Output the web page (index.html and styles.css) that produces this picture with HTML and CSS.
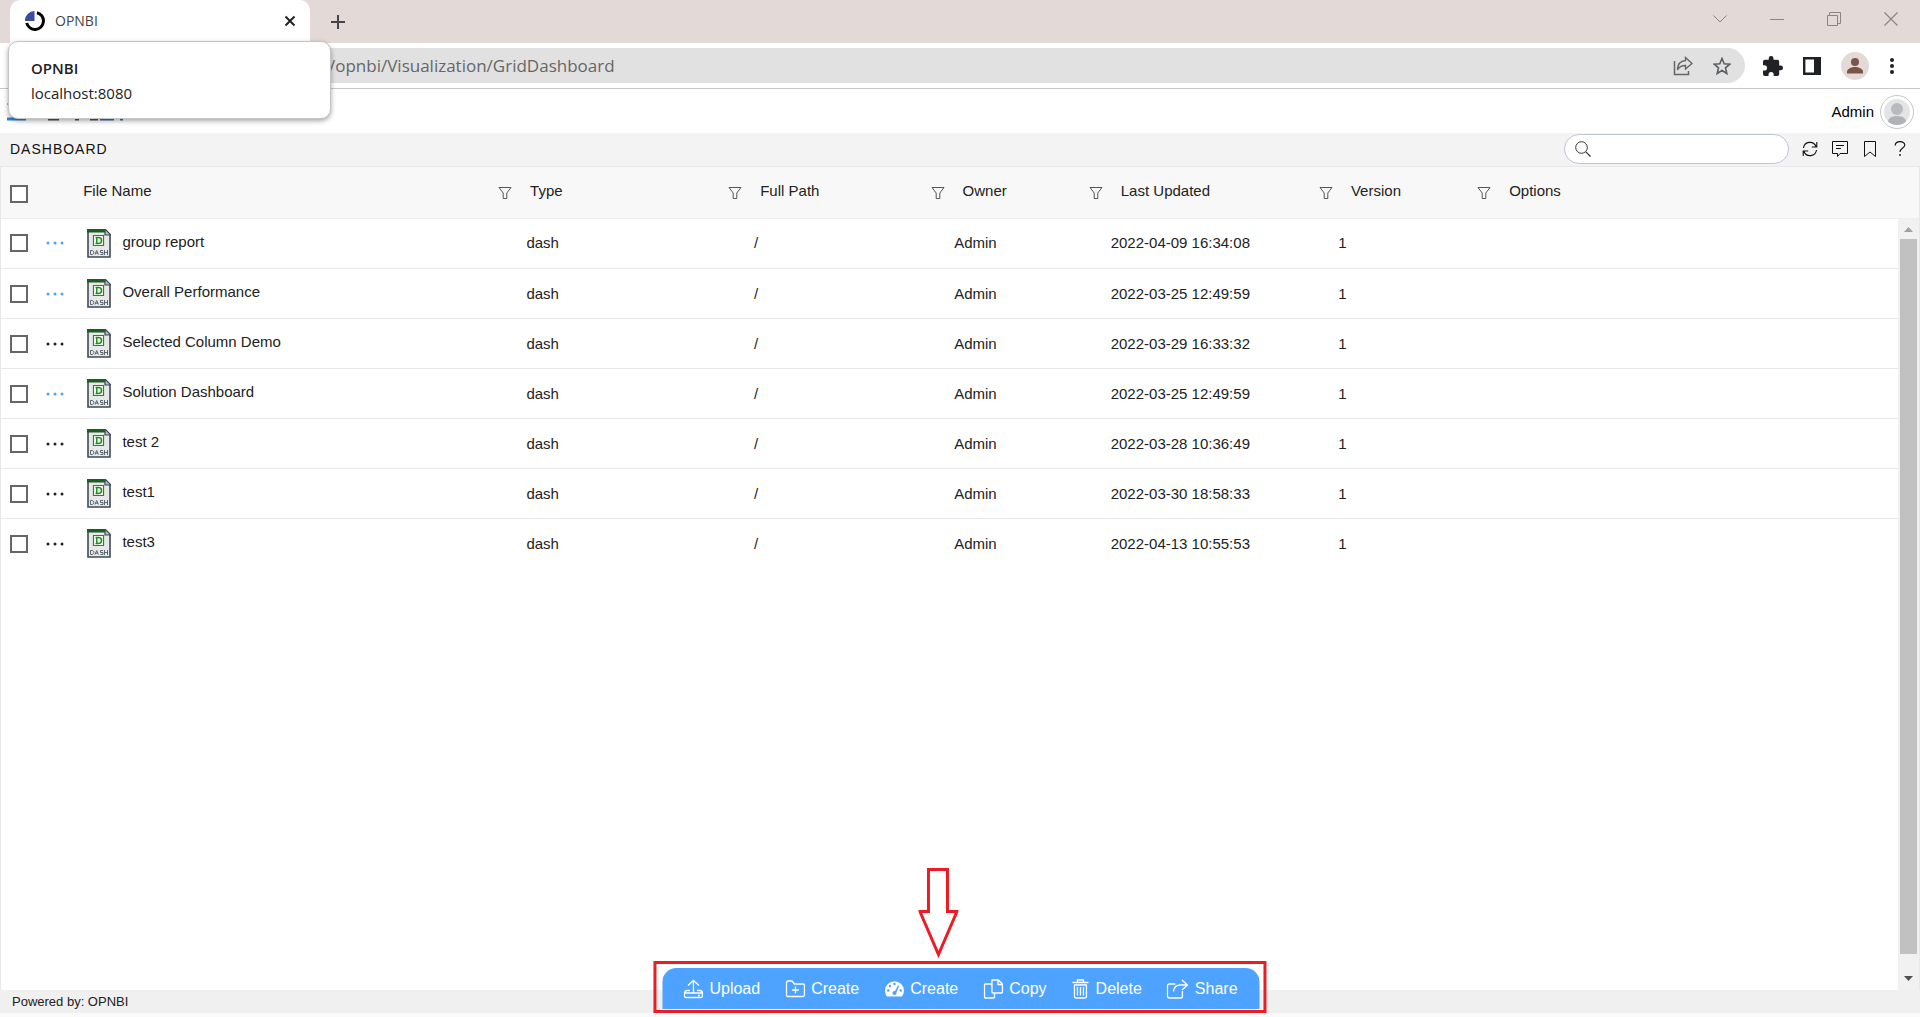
FILE: index.html
```html
<!DOCTYPE html>
<html lang="en">
<head>
<meta charset="utf-8">
<title>OPNBI</title>
<link rel="stylesheet" href="styles.css">
</head>
<body>
<svg class="defs" width="0" height="0" aria-hidden="true">
  <symbol id="filter" viewBox="0 0 14 14"><path d="M1 1.5h12L8.8 7v5.5H5.2V7z" fill="none" stroke="#555" stroke-width="1"/></symbol>
  <symbol id="dash" viewBox="0 0 24 29">
    <path d="M1 1h17l5 5v22H1z" fill="#e8e8e8" stroke="#3c4a57" stroke-width="1.6"/>
    <path d="M0 0h18v3.500H0z" fill="#1b5e20"/>
    <path d="M18 0v6h6z" fill="#b5bbc2" stroke="#3c4a57" stroke-width="1.200"/>
    <path d="M6.500 6.500h10v10h-10z" fill="#fff" stroke="#1a8f1a" stroke-width="1.200"/>
    <path d="M8.500 8.500h3c4 0 4 6 0 6h-3m1.300-6v6" fill="none" stroke="#1a8f1a" stroke-width="1.500"/>
    <path d="M3.500 21.500v4h1.500c2.400 0 2.400-4 0-4zM8 25.500l1.700-4 1.700 4m-2.900-1.300h2.400M16 21.500h-2.500v2H16v2h-2.700M17.500 21v5m3-5v5m-3-2.500h3" fill="none" stroke="#3c4a57" stroke-width=".8"/>
  </symbol>
  <symbol id="dots" viewBox="0 0 18 4"><circle cx="2" cy="2" r="1.500"/><circle cx="9" cy="2" r="1.500"/><circle cx="16" cy="2" r="1.500"/></symbol>
</svg>

<header class="browser">
  <div class="tabs">
    <div class="tab">
      <svg class="favicon" width="20" height="20" viewBox="0 0 20 20"><path d="M9.500 0v10H0A9.500 9.500 0 0 1 9.500 0z" fill="#364f9e"/><path d="M12 1.700A8.500 8.500 0 1 1 1.700 12" fill="none" stroke="#000" stroke-width="3"/></svg>
      <span class="tab-title">OPNBI</span>
      <button class="icon-button" aria-label="Close tab"><svg width="12" height="12" viewBox="0 0 12 12"><path d="M1.500 1.500l9 9m0-9l-9 9" stroke="#222" stroke-width="2"/></svg></button>
    </div>
    <button class="icon-button" aria-label="New tab"><svg width="16" height="16" viewBox="0 0 16 16"><path d="M8 1v14M1 8h14" stroke="#454545" stroke-width="2"/></svg></button>
    <div class="window-controls">
      <button class="icon-button" aria-label="Search tabs"><svg width="14" height="14" viewBox="0 0 14 14"><path d="M.5 3.500L7 10l6.500-6.500" fill="none" stroke="#8b8482"/></svg></button>
      <button class="icon-button" aria-label="Minimize"><svg width="14" height="14" viewBox="0 0 14 14"><path d="M0 7.500h14" stroke="#8b8482"/></svg></button>
      <button class="icon-button" aria-label="Restore"><svg width="14" height="14" viewBox="0 0 14 14"><path d="M.5 3.500h10v10H.5zM2.500 3V.5h11v11h-3" fill="none" stroke="#8b8482"/></svg></button>
      <button class="icon-button" aria-label="Close"><svg width="14" height="14" viewBox="0 0 14 14"><path d="M.5.5l13 13m0-13l-13 13" stroke="#8b8482" stroke-width="1.200"/></svg></button>
    </div>
  </div>
  <div class="address-row">
    <div class="address">
      <span class="url">/opnbi/Visualization/GridDashboard</span>
      <button class="icon-button" aria-label="Share page"><svg width="20" height="20" viewBox="0 0 20 20"><path d="M1.500 5v13.500h14V15" fill="none" stroke="#666" stroke-width="1.500"/><path d="M12.500 1.500L19 7.500l-6.500 5.500v-3.500c-4 0-6.500 1.500-8 4.500 0-5.500 3-9 8-9.500z" fill="none" stroke="#666" stroke-width="1.400"/></svg></button>
      <button class="icon-button" aria-label="Bookmark page"><svg width="18" height="18" viewBox="0 0 18 18"><path d="M9 1.500l2.200 5.200 5.600.5-4.300 3.700 1.300 5.600L9 13.500l-4.800 3 1.300-5.600-4.300-3.700 5.600-.5z" fill="none" stroke="#5b5e62" stroke-width="1.600"/></svg></button>
    </div>
    <button class="icon-button" aria-label="Extensions"><svg width="20" height="20" viewBox="2 1 21 21"><path d="M20.500 11H19V7a2 2 0 0 0-2-2h-4V3.500a2.500 2.500 0 0 0-5 0V5H4a2 2 0 0 0-2 2v3.800h1.500a2.700 2.700 0 0 1 0 5.400H2V20a2 2 0 0 0 2 2h3.800v-1.500a2.700 2.700 0 0 1 5.400 0V22H17a2 2 0 0 0 2-2v-4h1.500a2.500 2.500 0 0 0 0-5z" fill="#202124"/></svg></button>
    <button class="icon-button" aria-label="Side panel"><svg width="18" height="18" viewBox="0 0 18 18"><path d="M1.200 1.200h15.600v15.600H1.200z" fill="#fff" stroke="#202124" stroke-width="2.400"/><path d="M11 1h6v16h-6z" fill="#202124"/></svg></button>
    <button class="icon-button" aria-label="Profile"><svg width="28" height="28" viewBox="0 0 28 28"><circle cx="14" cy="14" r="14" fill="#e3dad7"/><circle cx="14" cy="10" r="4" fill="#795548"/><path d="M6 21.500v-2c0-2.600 4.500-4.500 8-4.500s8 1.900 8 4.500v2z" fill="#795548"/></svg></button>
    <button class="icon-button" aria-label="Browser menu"><svg width="6" height="18" viewBox="0 0 6 18"><g fill="#202124"><circle cx="3" cy="3" r="2"/><circle cx="3" cy="9" r="2"/><circle cx="3" cy="15" r="2"/></g></svg></button>
  </div>
  <div class="tab-card" role="tooltip">
    <strong>OPNBI</strong>
    <span>localhost:8080</span>
  </div>
</header>

<div class="brand-bar">
  <svg class="brand" width="120" height="18" viewBox="0 0 120 18" role="img" aria-label="OPNBI"><path d="M1 0h19v2H1z" fill="#7fb8ff"/><path d="M1 14.500h19v3H1z" fill="#2e86e0"/><path d="M42 16.500h11M69 16.500h4M84 16.500h8" stroke="#555" stroke-width="2"/><path d="M94 16.500h14M114 16.500h3" stroke="#3f6fc0" stroke-width="2"/></svg>
  <div class="user">
    <span>Admin</span>
    <span class="avatar"><svg width="26" height="26" viewBox="0 0 26 26"><defs><clipPath id="face"><circle cx="13" cy="13" r="13"/></clipPath></defs><g clip-path="url(#face)"><path d="M0 0h26v26H0z" fill="#e2e4e6"/><circle cx="13" cy="10" r="6" fill="#b8babd"/><path d="M4 26v-3c0-4 4-6 9-6s9 2 9 6v3z" fill="#b0b2b5"/></g></svg></span>
  </div>
</div>

<div class="title-bar">
  <h1>DASHBOARD</h1>
  <div class="title-tools">
    <label class="search">
      <svg width="16" height="16" viewBox="0 0 16 16"><circle cx="6.500" cy="6.500" r="5.800" fill="none" stroke="#333"/><path d="M10.800 10.800l4.700 4.700" stroke="#333" stroke-width="1.200"/></svg>
      <input type="search" aria-label="Search">
    </label>
    <button class="icon-button" aria-label="Refresh"><svg width="16" height="16" viewBox="0 0 16 16"><path d="M1.500 7A6.500 6.500 0 0 1 14 5.500M14.800 1v5h-5M14.500 9A6.500 6.500 0 0 1 2 10.500M1.200 15v-5h5" fill="none" stroke="#111" stroke-width="1.100"/></svg></button>
    <button class="icon-button" aria-label="Comments"><svg width="16" height="16" viewBox="0 0 16 16"><path d="M.5.5h15v12H8l-2.500 3v-3h-5z" fill="none" stroke="#111"/><path d="M4 4.500h8M4 7.500h5" stroke="#111"/></svg></button>
    <button class="icon-button" aria-label="Bookmarks"><svg width="16" height="16" viewBox="0 0 16 16"><path d="M2.500.5h11v15L8 11l-5.500 4.500z" fill="none" stroke="#111"/></svg></button>
    <button class="icon-button" aria-label="Help"><svg width="16" height="16" viewBox="-2 0 16 16"><path d="M1.200 4.500C1.200-.6 10.800-.6 10.800 4c0 3-4.800 3-4.800 7" fill="none" stroke="#111" stroke-width="1.100"/><circle cx="6" cy="14" r=".9" fill="#111"/></svg></button>
  </div>
</div>

<main class="grid">
  <table class="grid-head">
    <colgroup><col class="c-pick"><col class="c-file"><col class="c-type"><col class="c-path"><col class="c-owner"><col class="c-date"><col class="c-version"><col></colgroup>
    <thead>
      <tr>
        <th scope="col"><input type="checkbox" aria-label="Select all"></th>
        <th scope="col"><div class="head-cell">File Name<button class="icon-button" aria-label="Filter File Name"><svg width="14" height="14"><use href="#filter"/></svg></button></div></th>
        <th scope="col"><div class="head-cell">Type<button class="icon-button" aria-label="Filter Type"><svg width="14" height="14"><use href="#filter"/></svg></button></div></th>
        <th scope="col"><div class="head-cell">Full Path<button class="icon-button" aria-label="Filter Full Path"><svg width="14" height="14"><use href="#filter"/></svg></button></div></th>
        <th scope="col"><div class="head-cell">Owner<button class="icon-button" aria-label="Filter Owner"><svg width="14" height="14"><use href="#filter"/></svg></button></div></th>
        <th scope="col"><div class="head-cell">Last Updated<button class="icon-button" aria-label="Filter Last Updated"><svg width="14" height="14"><use href="#filter"/></svg></button></div></th>
        <th scope="col"><div class="head-cell">Version<button class="icon-button" aria-label="Filter Version"><svg width="14" height="14"><use href="#filter"/></svg></button></div></th>
        <th scope="col"><div class="head-cell">Options</div></th>
      </tr>
    </thead>
  </table>
  <div class="grid-scroll">
    <table class="grid-body">
      <colgroup><col class="c-pick"><col class="c-file"><col class="c-type"><col class="c-path"><col class="c-owner"><col class="c-date"><col class="c-version"><col></colgroup>
      <tbody>
        <tr><td><div class="pick"><input type="checkbox" aria-label="Select group report"><button class="icon-button dots linked" aria-label="Actions"><svg width="18" height="4"><use href="#dots"/></svg></button></div></td><td><div class="file"><svg width="24" height="29"><use href="#dash"/></svg><span>group report</span></div></td><td>dash</td><td>/</td><td>Admin</td><td>2022-04-09 16:34:08</td><td>1</td><td></td></tr>
        <tr><td><div class="pick"><input type="checkbox" aria-label="Select Overall Performance"><button class="icon-button dots linked" aria-label="Actions"><svg width="18" height="4"><use href="#dots"/></svg></button></div></td><td><div class="file"><svg width="24" height="29"><use href="#dash"/></svg><span>Overall Performance</span></div></td><td>dash</td><td>/</td><td>Admin</td><td>2022-03-25 12:49:59</td><td>1</td><td></td></tr>
        <tr><td><div class="pick"><input type="checkbox" aria-label="Select Selected Column Demo"><button class="icon-button dots" aria-label="Actions"><svg width="18" height="4"><use href="#dots"/></svg></button></div></td><td><div class="file"><svg width="24" height="29"><use href="#dash"/></svg><span>Selected Column Demo</span></div></td><td>dash</td><td>/</td><td>Admin</td><td>2022-03-29 16:33:32</td><td>1</td><td></td></tr>
        <tr><td><div class="pick"><input type="checkbox" aria-label="Select Solution Dashboard"><button class="icon-button dots linked" aria-label="Actions"><svg width="18" height="4"><use href="#dots"/></svg></button></div></td><td><div class="file"><svg width="24" height="29"><use href="#dash"/></svg><span>Solution Dashboard</span></div></td><td>dash</td><td>/</td><td>Admin</td><td>2022-03-25 12:49:59</td><td>1</td><td></td></tr>
        <tr><td><div class="pick"><input type="checkbox" aria-label="Select test 2"><button class="icon-button dots" aria-label="Actions"><svg width="18" height="4"><use href="#dots"/></svg></button></div></td><td><div class="file"><svg width="24" height="29"><use href="#dash"/></svg><span>test 2</span></div></td><td>dash</td><td>/</td><td>Admin</td><td>2022-03-28 10:36:49</td><td>1</td><td></td></tr>
        <tr><td><div class="pick"><input type="checkbox" aria-label="Select test1"><button class="icon-button dots" aria-label="Actions"><svg width="18" height="4"><use href="#dots"/></svg></button></div></td><td><div class="file"><svg width="24" height="29"><use href="#dash"/></svg><span>test1</span></div></td><td>dash</td><td>/</td><td>Admin</td><td>2022-03-30 18:58:33</td><td>1</td><td></td></tr>
        <tr><td><div class="pick"><input type="checkbox" aria-label="Select test3"><button class="icon-button dots" aria-label="Actions"><svg width="18" height="4"><use href="#dots"/></svg></button></div></td><td><div class="file"><svg width="24" height="29"><use href="#dash"/></svg><span>test3</span></div></td><td>dash</td><td>/</td><td>Admin</td><td>2022-04-13 10:55:53</td><td>1</td><td></td></tr>
      </tbody>
    </table>
    <div class="scrollbar" aria-hidden="true">
      <svg width="9" height="5" viewBox="0 0 9 5"><path d="M0 5l4.500-5L9 5z" fill="#a0a0a0"/></svg>
      <div class="thumb"></div>
      <svg width="9" height="5" viewBox="0 0 9 5"><path d="M0 0l4.500 5L9 0z" fill="#505050"/></svg>
    </div>
  </div>
</main>

<footer>Powered by: OPNBI</footer>

<div class="callout">
  <svg class="pointer" width="40" height="90" viewBox="0 0 40 90"><path d="M10 1.500h19v42h9.500L20 86.500 1.500 43.500H10z" fill="none" stroke="#ed1c24" stroke-width="3"/></svg>
  <div class="frame">
    <div class="actions">
      <button><svg width="20" height="20" viewBox="0 0 20 20"><path d="M10 14V1.500M4.500 6.500L10 1.500l5.500 5M6.500 11.500h-3C2 11.500 1 13 1 14.500V17c0 1 .5 1.500 1.500 1.500h15c1 0 1.500-.5 1.500-1.500v-2.500c0-1.500-1-3-2.500-3h-3M1.500 14h17M14.500 16.500h2"/></svg>Upload</button>
      <button><svg width="20" height="20" viewBox="0 0 20 20"><path d="M1 16V3.500C1 2.500 1.500 2 2.500 2h4L9 5h8.500c1 0 1.500.5 1.500 1.500V16c0 1-.5 1.500-1.500 1.500h-15C1.500 17.500 1 17 1 16zM10 7.500v7M6.500 11h7"/></svg>Create</button>
      <button><svg width="20" height="20" viewBox="0 0 20 20"><path class="solid" d="M2.500 17.500a9.500 9.500 0 1 1 15 0z"/><g class="cut"><circle cx="10" cy="5" r="1.200"/><circle cx="5.500" cy="7" r="1.200"/><circle cx="3.800" cy="11.500" r="1.200"/><circle cx="16.200" cy="11.500" r="1.200"/><circle cx="10" cy="14" r="2"/><path d="M9.500 14l4-7.500 1.200.6-3.200 7.400z"/></g></svg>Create</button>
      <button><svg width="20" height="20" viewBox="0 0 20 20"><path d="M9 1h6l4 4v8c0 .7-.3 1-1 1H9.500c-.7 0-1-.3-1-1V1zM14.500 1v4.500H19M8.500 5H2c-.7 0-1 .3-1 1v12c0 .7.300 1 1 1h8c.7 0 1-.3 1-1v-4"/></svg>Copy</button>
      <button><svg width="18" height="20" viewBox="0 0 18 20"><path d="M1 3.500h16M6 3.500V1h6v2.500M2.500 6h13M3 6v11.500c0 1 .5 1.500 1.500 1.500h9c1 0 1.500-.5 1.500-1.500V6M6 8v8.500M9 8v8.500M12 8v8.500"/></svg>Delete</button>
      <button><svg width="22" height="20" viewBox="0 0 22 20"><path d="M9 5H3C1.800 5 1 5.800 1 7v10c0 1.200.8 2 2 2h11c1.200 0 2-.8 2-2v-5M7 12.500C7.500 8 10 6 14 6h6.500M15.500 1l5.500 5-5.500 5"/></svg>Share</button>
    </div>
  </div>
</div>
</body>
</html>
```

FILE: styles.css
```css
* { box-sizing: border-box; }

body {
  margin: 0;
  min-height: 100vh;
  display: flex;
  flex-direction: column;
  position: relative;
  background: #fff;
  color: #222;
  font: 15px/20px "Liberation Sans", Arial, sans-serif;
}

svg { display: block; flex: none; }
.defs { position: absolute; }

button {
  font: inherit;
  color: inherit;
  background: none;
  border: 0;
  padding: 0;
}

.icon-button { display: flex; align-items: center; flex: none; }

/* Browser chrome */
.browser {
  position: relative;
  border-bottom: 1px solid #c8c8c8;
  font-family: "Open Sans", "Noto Sans", sans-serif;
}

.tabs {
  display: flex;
  align-items: center;
  height: 43px;
  padding: 0 22px 0 10px;
  background: #e3dad7;
}

.tab {
  display: flex;
  align-items: center;
  width: 300px;
  height: 43px;
  padding: 0 14px 2px 15px;
  margin-right: 20px;
  background: #fff;
  border-radius: 10px 10px 0 0;
}

.tab-title { flex: 1; margin-left: 10px; font-size: 14px; color: #444; }

.window-controls { display: flex; gap: 43px; margin-left: auto; padding-bottom: 6px; }

.address-row {
  display: flex;
  align-items: center;
  gap: 20px;
  height: 45px;
  padding: 0 25px 0 10px;
}

.address {
  flex: 1;
  display: flex;
  align-items: center;
  gap: 20px;
  height: 35px;
  padding: 0 14px 0 319px;
  margin-right: -2px;
  background: #e1e1e1;
  border-radius: 18px;
}

.url { flex: 1; font-size: 17px; color: #666; }

.tab-card {
  position: absolute;
  left: 8px;
  top: 41px;
  z-index: 2;
  display: flex;
  flex-direction: column;
  gap: 5px;
  width: 323px;
  height: 78px;
  padding: 16px 22px;
  background: #fff;
  border: 1px solid #c4c4c4;
  border-radius: 10px;
  box-shadow: 0 2px 5px rgba(0, 0, 0, .35);
  font-size: 15px;
  color: #222;
}

.tab-card strong { font-weight: 600; }

/* Application header */
.brand-bar {
  display: flex;
  justify-content: space-between;
  align-items: center;
  height: 44px;
  padding: 1px 6px 0;
}

.user { display: flex; align-items: center; gap: 6px; color: #000; }

.avatar { padding: 2px; border: 1px solid #c8c8c8; border-radius: 50%; }
.avatar svg { margin: 1px; }

.title-bar {
  display: flex;
  justify-content: space-between;
  align-items: center;
  height: 33px;
  padding: 0 12px 1px 10px;
  background: #f3f3f3;
}

h1 {
  margin: 0;
  font-size: 14px;
  font-weight: 400;
  letter-spacing: 1px;
  color: #111;
}

.title-tools { display: flex; align-items: center; gap: 14px; }

.search {
  display: flex;
  align-items: center;
  gap: 8px;
  width: 225px;
  height: 30px;
  margin-right: -1px;
  padding: 0 12px 0 10px;
  background: #fff;
  border: 1px solid #bfc5d6;
  border-radius: 15px;
}

.search input {
  flex: 1;
  min-width: 0;
  border: 0;
  outline: 0;
  background: none;
  font: inherit;
}

/* File grid */
.grid {
  flex: 1;
  display: flex;
  flex-direction: column;
  border: 1px solid #e8e8e8;
  border-bottom: 0;
}

table {
  width: 100%;
  table-layout: fixed;
  border-collapse: collapse;
}

.c-pick { width: 3.45%; }
.c-file { width: 23.3%; }
.c-type, .c-date { width: 12%; }
.c-path { width: 10.55%; }
.c-owner, .c-version { width: 8.25%; }

th {
  height: 51px;
  padding: 0 2px 2px 16px;
  background: #f8f8f8;
  border-bottom: 1px solid #eee;
  font-weight: 400;
  text-align: left;
}

th:first-child { padding: 3px 0 0 9px; }

.head-cell { display: flex; justify-content: space-between; align-items: center; }
.head-cell .icon-button { padding-top: 4px; }

td {
  height: 50px;
  padding: 0 0 0 18px;
  border-bottom: 1px solid #e8e8e8;
}

tr:last-child td { border-bottom-color: transparent; }
thead tr:last-child th { border-bottom-color: #eee; }

td:first-child { padding-left: 9px; }

input[type="checkbox"] {
  appearance: none;
  display: block;
  width: 18px;
  height: 18px;
  margin: 0;
  background: #fff;
  border: 2px solid #666;
}

.pick { display: flex; align-items: center; gap: 18px; }
.dots svg { fill: #222; }
.dots.linked svg { fill: #4da3ff; }

.file { display: flex; align-items: center; gap: 11px; padding-left: 3px; }
.file span { padding-bottom: 3px; }

.grid-scroll { flex: 1; display: flex; align-items: stretch; }
.grid-body { flex: 1; align-self: flex-start; }

.scrollbar {
  display: flex;
  flex-direction: column;
  align-items: center;
  gap: 7px;
  width: 21px;
  padding: 8px 0 9px;
  background: #f1f1f1;
}

.scrollbar .thumb { flex: 1; width: 17px; margin-bottom: 15px; background: #c1c1c1; }

footer {
  height: 27px;
  padding: 2px 12px 0;
  background: #f0f0f0;
  border-bottom: 4px solid #fafafa;
  font-size: 13px;
}

/* Action bar with its callout */
.callout {
  position: absolute;
  left: 50%;
  bottom: 4px;
  transform: translateX(-50%);
  display: flex;
  flex-direction: column;
  align-items: center;
}

.pointer { margin: 0 44px 3px 0; }

.frame {
  padding: 4px 4px 1px 6px;
  border: 3px solid #ed1c24;
}

.actions {
  display: flex;
  justify-content: center;
  align-items: center;
  gap: 25px;
  height: 41px;
  padding: 0 22px 0 21px;
  background: #4da3ff;
  border-radius: 14px 14px 0 0;
  color: #fff;
  font-size: 16px;
}

.actions button { display: flex; align-items: center; gap: 6px; }
.actions svg { fill: none; stroke: #fff; stroke-width: 1.3; }
.actions .solid { fill: #fff; stroke: none; }
.actions .cut { fill: #4da3ff; stroke: none; }
```
